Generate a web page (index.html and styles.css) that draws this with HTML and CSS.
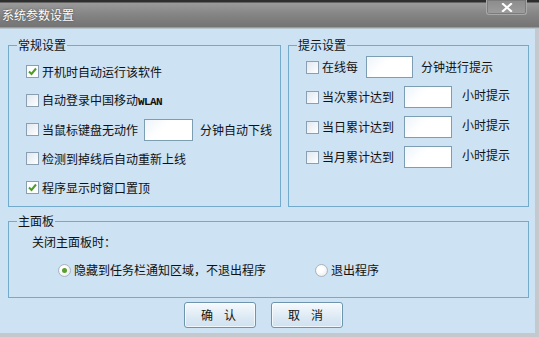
FILE: index.html
```html
<!DOCTYPE html>
<html lang="zh-CN">
<head>
<meta charset="utf-8">
<title>系统参数设置</title>
<link rel="stylesheet" href="styles.css">
</head>
<body>
<div class="window">
  <div class="titlebar">
    <span class="title">系统参数设置</span>
    <span class="close"><svg width="12" height="9" viewBox="0 0 12 9"><path d="M2 1 L10 8 M10 1 L2 8" stroke="#fff" stroke-width="2.2" stroke-linecap="square"/></svg></span>
  </div>
  <div class="frame">
    <div class="content">
      <div class="top">
        <fieldset class="group general">
          <legend>常规设置</legend>
          <div class="rows rows-general">
            <div class="row"><span class="cb checked"><svg width="11" height="11" viewBox="0 0 11 11"><path d="M2 5.5 L4.5 8 L9 2.5" fill="none" stroke="#4f9c22" stroke-width="2"/></svg></span><span class="lbl">开机时自动运行该软件</span></div>
            <div class="row"><span class="cb"></span><span class="lbl">自动登录中国移动<span class="mono">WLAN</span></span></div>
            <div class="row"><span class="cb"></span><span class="lbl">当鼠标键盘无动作</span><span class="inp inp-idle"></span><span class="lbl">分钟自动下线</span></div>
            <div class="row"><span class="cb"></span><span class="lbl">检测到掉线后自动重新上线</span></div>
            <div class="row"><span class="cb checked"><svg width="11" height="11" viewBox="0 0 11 11"><path d="M2 5.5 L4.5 8 L9 2.5" fill="none" stroke="#4f9c22" stroke-width="2"/></svg></span><span class="lbl">程序显示时窗口置顶</span></div>
          </div>
        </fieldset>
        <fieldset class="group hint">
          <legend>提示设置</legend>
          <div class="rows rows-hint">
            <div class="row"><span class="cb"></span><span class="lbl w-short">在线每</span><span class="inp inp-short"></span><span class="lbl">分钟进行提示</span></div>
            <div class="row"><span class="cb"></span><span class="lbl w-long">当次累计达到</span><span class="inp"></span><span class="lbl up">小时提示</span></div>
            <div class="row"><span class="cb"></span><span class="lbl w-long">当日累计达到</span><span class="inp"></span><span class="lbl up">小时提示</span></div>
            <div class="row"><span class="cb"></span><span class="lbl w-long">当月累计达到</span><span class="inp"></span><span class="lbl up">小时提示</span></div>
          </div>
        </fieldset>
      </div>
      <fieldset class="group panel">
        <legend>主面板</legend>
        <div class="panel-body">
          <div class="panel-label">关闭主面板时：</div>
          <div class="radios">
            <span class="radio-item first"><span class="radio on"></span><span class="lbl">隐藏到任务栏通知区域，不退出程序</span></span>
            <span class="radio-item"><span class="radio"></span><span class="lbl">退出程序</span></span>
          </div>
        </div>
      </fieldset>
      <div class="buttons">
        <button class="btn"><span>确</span><span>认</span></button>
        <button class="btn"><span>取</span><span>消</span></button>
      </div>
    </div>
  </div>
</div>
</body>
</html>
```

FILE: styles.css
```css
* { box-sizing: border-box; }
html, body { margin: 0; padding: 0; }
body {
  width: 539px;
  height: 337px;
  overflow: hidden;
  font-family: "Noto Sans CJK SC", "Noto Sans", sans-serif;
  font-size: 12px;
  line-height: 14px;
  color: #111;
}
.window {
  width: 539px;
  height: 337px;
  display: flex;
  flex-direction: column;
  background: #c5c9cd;
}
.titlebar {
  height: 29px;
  display: flex;
  align-items: flex-start;
  background: linear-gradient(#2e2e2e 0, #2e2e2e 2px, #9a9a9a 3px, #858585 14px, #747474 27px, #b8c4cc 28px);
}
.title {
  color: #fff;
  padding: 8px 0 0 2px;
  text-shadow: 0 0 2px #444;
}
.close {
  margin-left: auto;
  margin-right: 12px;
  width: 41px;
  height: 15px;
  display: flex;
  align-items: center;
  justify-content: center;
  background: linear-gradient(#8c8c8c, #9d9d9d);
  border: 1px solid #a8a8a8;
  border-top: none;
  border-radius: 0 0 3px 3px;
  box-shadow: inset 0 0 0 1px #7c7c7c;
}
.frame {
  flex: 1;
  display: flex;
}
.content {
  width: 535px;
  height: 304px;
  background: #cde2f3;
  padding: 9px 0 0 8px;
  display: flex;
  flex-direction: column;
}
.top {
  display: flex;
  gap: 7px;
  height: 169px;
}
.group {
  margin: 0;
  padding: 0;
  min-width: 0;
  border: 1px solid #72abcb;
}
.group legend {
  margin-left: 8px;
  padding: 0 1px;
  font-size: 12px;
  line-height: 14px;
}
.general { width: 273px; }
.hint { width: 241px; }
.rows { padding-left: 17px; }
.rows-general { padding-top: 5px; }
.rows-general .row { height: 29px; }
.rows-hint .row { height: 30px; }
.row {
  display: flex;
  align-items: center;
}
.cb {
  width: 13px;
  height: 13px;
  border: 1px solid #8a9fb1;
  background: linear-gradient(135deg, #dfe8f0, #ffffff);
  display: flex;
  align-items: center;
  justify-content: center;
  margin-right: 3px;
  flex: none;
}
.cb.checked { background: #fbfdff; }
.lbl { white-space: nowrap; }
.mono {
  font-family: "Liberation Mono", monospace;
  font-size: 11px;
  letter-spacing: -0.6px;
  font-weight: bold;
}
.inp {
  width: 48px;
  height: 22px;
  border: 1px solid #7d9db2;
  background: linear-gradient(135deg, #eef5fb, #ffffff 40%);
  flex: none;
  margin: 0 10px;
}
.inp-idle { width: 49px; margin: 0 7px 0 6px; }
.inp-short { width: 47px; margin: 0 8px; }
.up { position: relative; top: -2px; }
.panel {
  margin-top: 7px;
  width: 521px;
}
.panel-body {
  padding: 0 0 13px 0;
}
.panel-label {
  height: 28px;
  display: flex;
  align-items: center;
  padding-left: 23px;
}
.radios {
  height: 28px;
  display: flex;
  align-items: center;
  padding-left: 49px;
}
.radio-item {
  display: flex;
  align-items: center;
}
.radio-item.first { margin-right: 49px; }
.radio {
  width: 13px;
  height: 13px;
  border-radius: 50%;
  border: 1px solid #a9b4bd;
  background: radial-gradient(circle at 40% 40%, #ffffff 30%, #dde3e8 100%);
  margin-right: 3px;
  display: flex;
  align-items: center;
  justify-content: center;
}
.radio.on::after {
  content: "";
  width: 5px;
  height: 5px;
  border-radius: 50%;
  background: #5a9e2e;
}
.buttons {
  margin-top: 4px;
  display: flex;
  justify-content: center;
  gap: 15px;
  padding-right: 16px;
}
.btn {
  width: 72px;
  height: 26px;
  border: 1px solid #6f94ad;
  border-radius: 3px;
  background: linear-gradient(#f6fafd, #dce9f4 60%, #cfe1f0);
  box-shadow: inset 0 0 0 1px rgba(255,255,255,0.7);
  font-family: "Noto Sans CJK SC", sans-serif;
  font-size: 12px;
  line-height: 14px;
  color: #111;
  display: flex;
  align-items: center;
  justify-content: center;
  gap: 11px;
  padding: 0 3px 0 0;
}
```
